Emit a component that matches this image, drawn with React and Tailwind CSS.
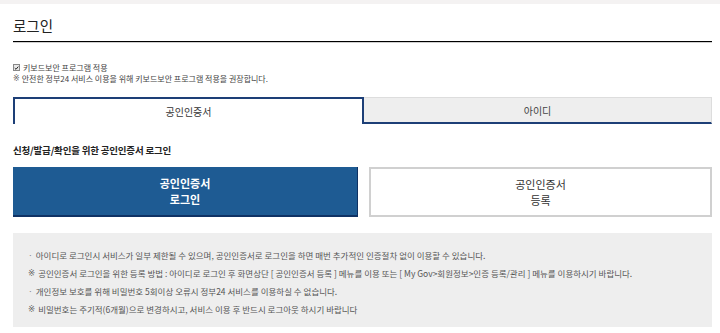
import React from "react";

const notes = [
  { mark: "·", text: "아이디로 로그인시 서비스가 일부 제한될 수 있으며, 공인인증서로 로그인을 하면 매번 추가적인 인증절차 없이 이용할 수 있습니다." },
  { mark: "※", text: "공인인증서 로그인을 위한 등록 방법 : 아이디로 로그인 후 화면상단 [ 공인인증서 등록 ] 메뉴를 이용 또는 [ My Gov>회원정보>인증 등록/관리 ] 메뉴를 이용하시기 바랍니다." },
  { mark: "·", text: "개인정보 보호를 위해 비밀번호 5회이상 오류시 정부24 서비스를 이용하실 수 없습니다." },
  { mark: "※", text: "비밀번호는 주기적(6개월)으로 변경하시고, 서비스 이용 후 반드시 로그아웃 하시기 바랍니다" },
];

// ※ falls back to a colour emoji font unless a text font is forced
const Ref = () => (
  <span className="text-[#666]" style={{ fontFamily: '"DejaVu Sans", sans-serif' }}>
    {"\u203B\uFE0E"}
  </span>
);

export default function App() {
  return (
    <div
      className="w-[720px] h-[333px] bg-white overflow-hidden text-[#333]"
      style={{ fontFamily: '"Noto Sans CJK KR", "Noto Sans", sans-serif' }}
    >
      <div className="h-[4px] bg-[#f4f2f2]" />
      <div className="pl-[13px] pr-[8px]">
        {/* title */}
        <div className="h-[37px] pt-[7px] flex items-center text-[14.5px] text-[#222]">로그인</div>
        <div className="h-px bg-black" />
        <div className="h-px bg-[#cfcfcf]" />

        {/* keyboard security */}
        <div className="mt-[19px] h-[11px] flex items-center gap-[3px] text-[8px] text-[#444] leading-none">
          <span className="w-[7px] h-[7px] border border-[#888] bg-[#e8e8e8] flex items-center justify-center">
            <svg viewBox="0 0 10 10" className="w-[6px] h-[6px]">
              <path d="M1.5 5.2 L4 7.6 L8.6 2.2" fill="none" stroke="#222" strokeWidth="2" />
            </svg>
          </span>
          <span>키보드보안 프로그램 적용</span>
        </div>
        <div className="h-[11px] flex items-center gap-[2px] text-[8px] text-[#444] leading-none">
          <Ref />
          <span>안전한 정부24 서비스 이용을 위해 키보드보안 프로그램 적용을 권장합니다.</span>
        </div>

        {/* tabs */}
        <div className="mt-[13px] flex h-[27px] text-[10px]">
          <div className="flex-1 bg-white border-2 border-b-0 border-[#1d3f77] flex items-center justify-center text-[#333]">
            공인인증서
          </div>
          <div className="flex-1 bg-[#eeeeee] border-t border-r border-[#dddddd] border-b-2 border-b-[#1d3f77] flex items-center justify-center text-[#444]">
            아이디
          </div>
        </div>

        {/* subtitle */}
        <div className="mt-[19px] h-[14px] flex items-center text-[9.5px] font-bold text-[#222] tracking-[-0.2px]">
          신청/발급/확인을 위한 공인인증서 로그인
        </div>

        {/* buttons */}
        <div className="mt-[10px] flex gap-[11px] h-[50px]">
          <button className="w-[345px] bg-[#1e5b93] border-r border-b-2 border-[#0f3264] text-white font-bold text-[11px] leading-[16px] flex flex-col items-center justify-center">
            <span>공인인증서</span>
            <span>로그인</span>
          </button>
          <button className="flex-1 bg-white border-2 border-[#d0d0d0] text-[#333] text-[11px] leading-[16px] flex flex-col items-center justify-center">
            <span>공인인증서</span>
            <span>등록</span>
          </button>
        </div>

        {/* notes */}
        <div className="mt-[16px] h-[94px] bg-[#eeeeee] pt-[13px] pl-[15px]">
          {notes.map((n, i) => (
            <div key={i} className="h-[18px] flex items-center text-[8.5px] text-[#555] leading-none whitespace-nowrap">
              {n.mark === "※" ? (
                <span className="mr-[3px]"><Ref /></span>
              ) : (
                <span className="mr-[3px] text-[#888]">{n.mark}</span>
              )}
              <span>{n.text}</span>
            </div>
          ))}
        </div>
      </div>
    </div>
  );
}
